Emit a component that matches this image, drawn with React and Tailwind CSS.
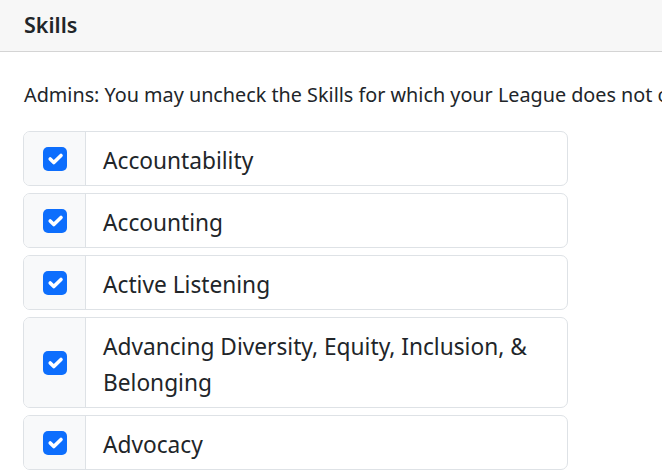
import React from "react";

const items = [
  "Accountability",
  "Accounting",
  "Active Listening",
  "Advancing Diversity, Equity, Inclusion, & Belonging",
  "Advocacy",
];

function Check() {
  return (
    <div className="w-[24px] h-[24px] rounded-[5px] bg-[#0d6efd] flex items-center justify-center">
      <svg width="24" height="24" viewBox="0 0 20 20">
        <path d="M6 10l3 3 6-6" fill="none" stroke="#fff" strokeWidth="3" strokeLinecap="round" strokeLinejoin="round" />
      </svg>
    </div>
  );
}

export default function App() {
  return (
    <div className="w-[662px] h-[475px] overflow-hidden bg-white text-[#212529]" style={{ fontFamily: '"Noto Sans", sans-serif' }}>
      <div className="h-[52px] bg-[#f7f7f7] border-b border-[#d4d4d4] flex items-center px-[24px]">
        <span className="text-[21.5px] font-semibold text-[#212529]">Skills</span>
      </div>
      <div className="px-[24px] pt-[29px]">
        <p className="text-[19.8px] whitespace-nowrap leading-[27px]">
          Admins: You may uncheck the Skills for which your League does not offer training or support.
        </p>
        <div className="mt-[23px] flex flex-col gap-[7px] w-[545px] -ml-[1px]">
          {items.map((t) => (
            <div key={t} className="flex border border-[#dee2e6] rounded-[7px] overflow-hidden">
              <div className="w-[62px] shrink-0 bg-[#f8f9fa] border-r border-[#dee2e6] flex items-center justify-center">
                <Check />
              </div>
              <div className="flex-1 pt-[11px] pb-[6px] pl-[17px] pr-[16px] text-[22.7px] leading-[36px]">{t}</div>
            </div>
          ))}
        </div>
      </div>
    </div>
  );
}
